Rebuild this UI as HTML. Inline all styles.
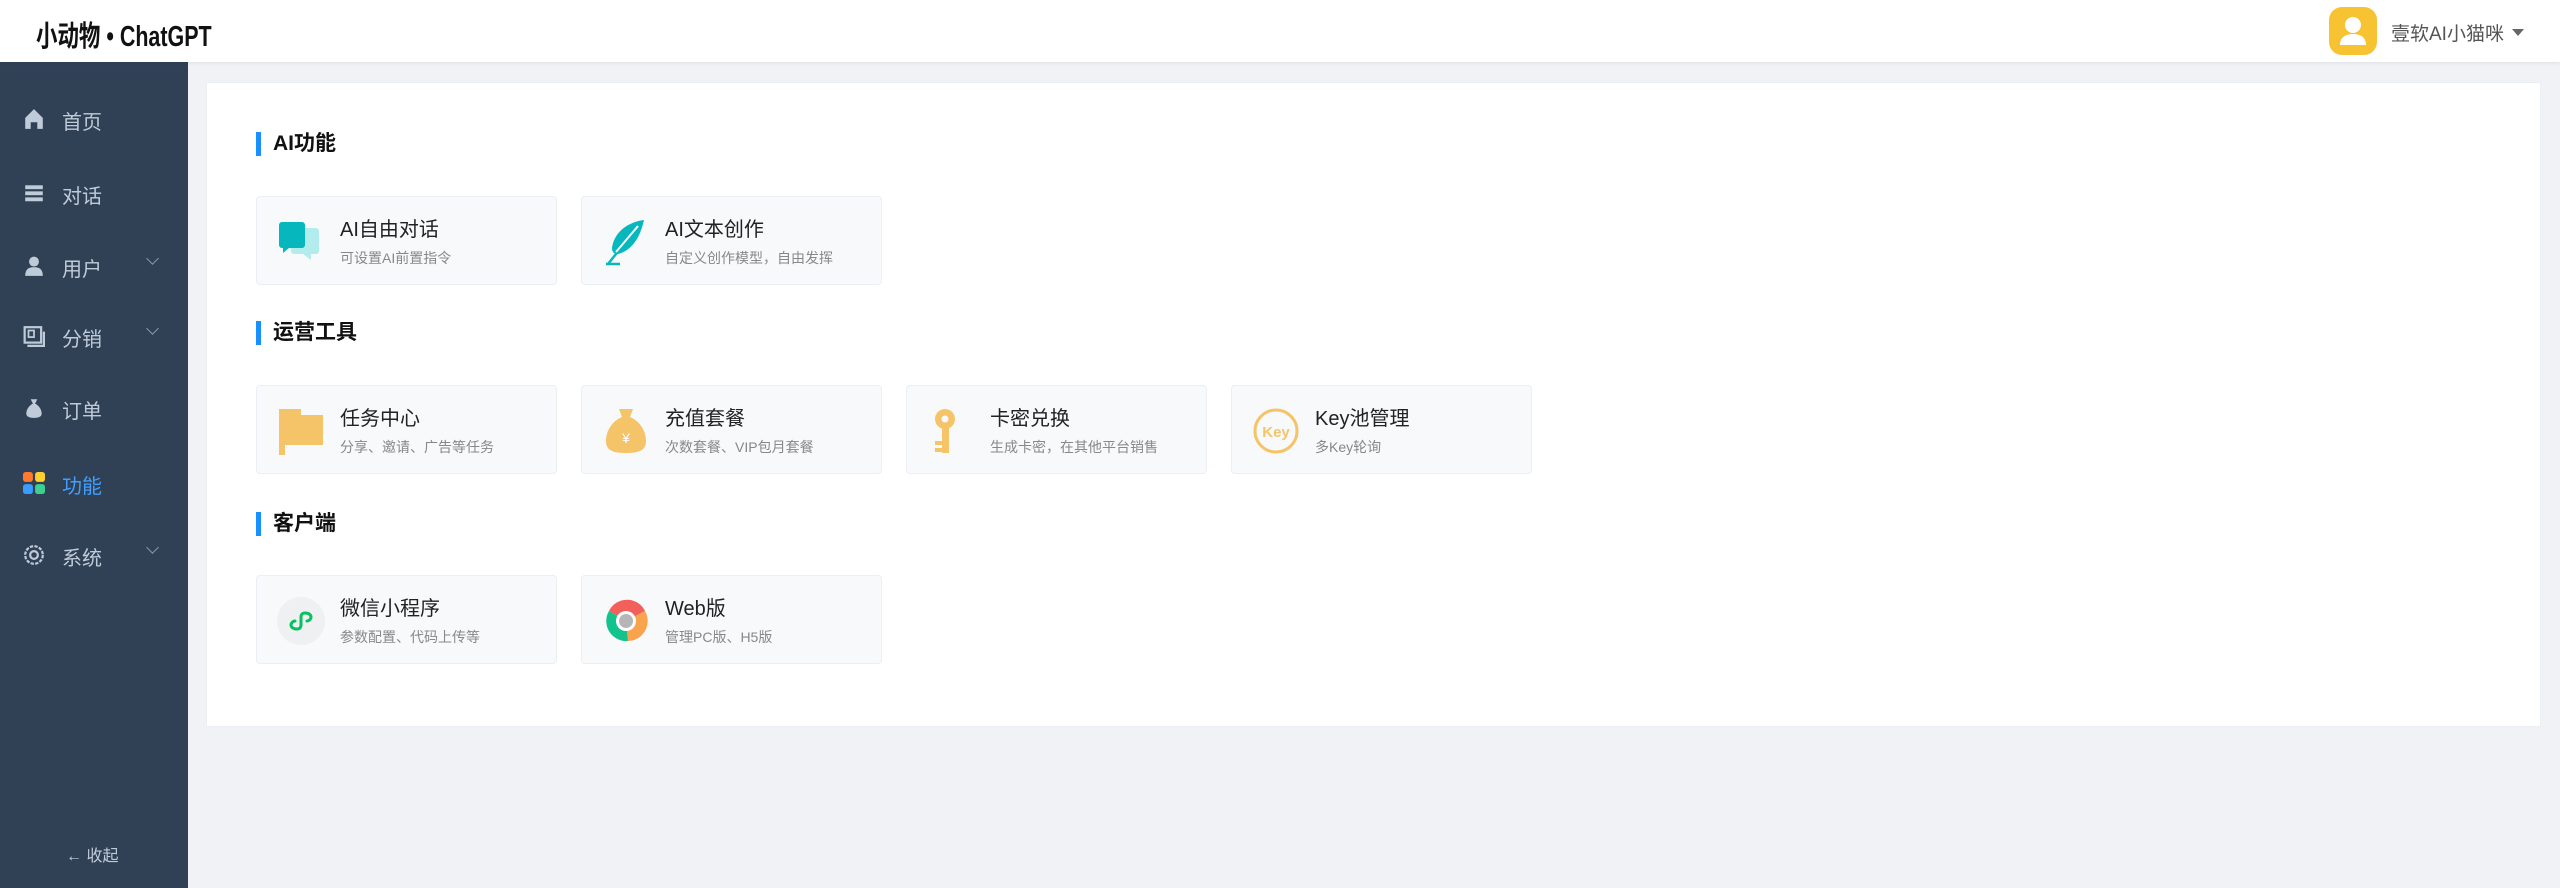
<!DOCTYPE html>
<html><head><meta charset="utf-8"><style>
*{margin:0;padding:0;box-sizing:border-box}
body{width:2560px;height:888px;overflow:hidden;background:#f0f2f5;font-family:"Liberation Sans","Noto Sans CJK SC",sans-serif;position:relative}
.hdr{position:absolute;left:0;top:0;width:2560px;height:62px;background:#fff;box-shadow:0 1px 4px rgba(0,21,41,.08);z-index:2}
.logo{position:absolute;left:36px;top:13px;font-size:29px;color:#111;font-weight:bold;transform:scaleX(0.74);transform-origin:left top;white-space:nowrap}
.av{position:absolute;left:2329px;top:7px;width:48px;height:48px;border-radius:13px;background:#f8c332}
.uname{position:absolute;left:2391px;top:19px;font-size:19px;color:#555}
.caret{position:absolute;left:2512px;top:29px;border-left:6px solid transparent;border-right:6px solid transparent;border-top:7px solid #666}
.side{position:absolute;left:0;top:62px;width:188px;height:826px;background:#304156}
.mi{position:absolute;left:0;width:188px;height:40px;color:#bfcbd9;font-size:20px}
.mi .ic{position:absolute;left:23px;top:9px;width:22px;height:22px}
.mi .t{position:absolute;left:62px;top:7px}
.mi .ch{position:absolute;left:148px;top:8px;width:9px;height:9px;border-right:1.5px solid #8a96a6;border-bottom:1.5px solid #8a96a6;transform:rotate(45deg)}
.main{position:absolute;left:206px;top:82px;width:2335px;height:645px;background:#fff;border:1px solid #ebeef5}
.st{position:absolute;left:256px;font-size:21px;font-weight:bold;color:#111;padding-left:17px;height:24px;line-height:24px}
.st:before{content:"";position:absolute;left:0;top:0;width:5px;height:24px;background:#1890ff}
.cd{position:absolute;width:301px;height:89px;background:#f8f9fb;border:1px solid #ebeef5;border-radius:4px}
.cd svg{position:absolute;left:20px;top:21px;width:48px;height:48px}
.cd .a{position:absolute;left:83px;top:16px;font-size:20px;color:#222}
.cd .b{position:absolute;left:83px;top:51px;font-size:14px;color:#888}
</style></head><body>
<div class="hdr">
<div class="logo">小动物 • ChatGPT</div>
<div class="av"><svg width="48" height="48" viewBox="0 0 48 48"><circle cx="24" cy="18" r="8" fill="#fff"/><path d="M11 38c0-8 6-11 13-11s13 3 13 11z" fill="#fff"/></svg></div>
<div class="uname">壹软AI小猫咪</div><div class="caret"></div>
</div>
<div class="side">
<div class="mi" style="top:37px"><svg class="ic" viewBox="0 0 20 20"><path d="M10 1L2 9v10h5v-6h6v6h5V9z" fill="#bfcbd9"/></svg><span class="t">首页</span></div>
<div class="mi" style="top:111px"><svg class="ic" viewBox="0 0 20 20"><rect x="2" y="3" width="16" height="3.5" fill="#bfcbd9"/><rect x="2" y="8.5" width="16" height="3.5" fill="#bfcbd9"/><rect x="2" y="14" width="16" height="3.5" fill="#bfcbd9"/></svg><span class="t">对话</span></div>
<div class="mi" style="top:184px"><svg class="ic" viewBox="0 0 20 20"><circle cx="10" cy="6" r="4.5" fill="#bfcbd9"/><path d="M2 19c0-6 3-8 8-8s8 2 8 8z" fill="#bfcbd9"/></svg><span class="t">用户</span><span class="ch"></span></div>
<div class="mi" style="top:254px"><svg class="ic" viewBox="0 0 20 20"><rect x="1.5" y="2" width="15" height="14" fill="none" stroke="#bfcbd9" stroke-width="2"/><rect x="5" y="5" width="5" height="6" fill="none" stroke="#bfcbd9" stroke-width="1.6"/><path d="M4 19h15V6" fill="none" stroke="#bfcbd9" stroke-width="2"/></svg><span class="t">分销</span><span class="ch"></span></div>
<div class="mi" style="top:326px"><svg class="ic" viewBox="0 0 20 20"><path d="M7 2h6l-2 4c4 2 6 6 6 9 0 3-3 4-7 4s-7-1-7-4c0-3 2-7 6-9z" fill="#bfcbd9"/></svg><span class="t">订单</span></div>
<div class="mi" style="top:401px;color:#409eff"><svg class="ic" viewBox="0 0 20 20"><rect x="0" y="0" width="9" height="9" rx="2.5" fill="#ff7a2f"/><rect x="11" y="0" width="9" height="9" rx="2.5" fill="#ffd02e"/><rect x="0" y="11" width="9" height="9" rx="2.5" fill="#3a9cff"/><rect x="11" y="11" width="9" height="9" rx="2.5" fill="#3ed08f"/></svg><span class="t">功能</span></div>
<div class="mi" style="top:473px"><svg class="ic" viewBox="0 0 20 20"><circle cx="10" cy="10" r="8" fill="none" stroke="#bfcbd9" stroke-width="2" stroke-dasharray="3 1.2"/><circle cx="10" cy="10" r="3.5" fill="none" stroke="#bfcbd9" stroke-width="2"/></svg><span class="t">系统</span><span class="ch"></span></div>
<div style="position:absolute;left:66px;top:780px;color:#bfcbd9;font-size:16px">← 收起</div>
</div>
<div class="main"></div>

<div class="st" style="top:132px">AI功能</div>
<div class="cd" style="left:256px;top:196px"><svg viewBox="0 0 48 48"><rect x="14" y="10" width="28" height="26" rx="3" fill="#b3ecec"/><path d="M26 36h8v6z" fill="#b3ecec"/><rect x="2" y="4" width="26" height="26" rx="3" fill="#06b8bd"/><path d="M6 30h6l-6 5z" fill="#06b8bd"/></svg><div class="a">AI自由对话</div><div class="b">可设置AI前置指令</div></div>
<div class="cd" style="left:581px;top:196px"><svg viewBox="0 0 48 48"><path d="M42 2C26 4 12 14 10 30c0 4 2 6 6 6 14-4 22-16 26-34z" fill="#06b8bd"/><path d="M38 6L6 46M4 46h14" stroke="#06b8bd" stroke-width="2.5" fill="none"/><path d="M36 8L14 34" stroke="#fff" stroke-width="2" fill="none"/></svg><div class="a">AI文本创作</div><div class="b">自定义创作模型，自由发挥</div></div>

<div class="st" style="top:321px">运营工具</div>
<div class="cd" style="left:256px;top:385px"><svg viewBox="0 0 48 48"><path d="M2 2h22v6h22v30H8v10H2z" fill="#f5c469"/></svg><div class="a">任务中心</div><div class="b">分享、邀请、广告等任务</div></div>
<div class="cd" style="left:581px;top:385px"><svg viewBox="0 0 48 48"><path d="M17 2h14l-3 8c10 4 16 14 16 24 0 10-8 12-20 12S4 44 4 34c0-10 6-20 16-24z" fill="#f5c469"/><text x="24" y="36" font-size="14" text-anchor="middle" fill="#fff" font-family="Liberation Sans">¥</text></svg><div class="a">充值套餐</div><div class="b">次数套餐、VIP包月套餐</div></div>
<div class="cd" style="left:906px;top:385px"><svg viewBox="0 0 48 48"><circle cx="18" cy="12" r="10" fill="#f5c469"/><circle cx="18" cy="12" r="3.5" fill="#f8f9fb"/><rect x="15" y="20" width="7" height="26" fill="#f5c469"/><rect x="8" y="34" width="8" height="4" fill="#f5c469"/><rect x="8" y="41" width="8" height="4" fill="#f5c469"/></svg><div class="a">卡密兑换</div><div class="b">生成卡密，在其他平台销售</div></div>
<div class="cd" style="left:1231px;top:385px"><svg viewBox="0 0 48 48"><circle cx="24" cy="24" r="21" fill="none" stroke="#f5c469" stroke-width="3"/><text x="24" y="30" font-size="15" font-weight="bold" text-anchor="middle" fill="#f5c469" font-family="Liberation Sans">Key</text></svg><div class="a">Key池管理</div><div class="b">多Key轮询</div></div>

<div class="st" style="top:512px">客户端</div>
<div class="cd" style="left:256px;top:575px"><svg viewBox="0 0 48 48"><circle cx="24" cy="24" r="24" fill="#eef0f2"/><path d="M20 32c-4 0-6-2-6-4s2-4 4-4M28 16c4 0 6 2 6 4s-2 4-4 4M20 32c3 0 4-2 4-4v-8c0-2 1-4 4-4" fill="none" stroke="#07c160" stroke-width="3" stroke-linecap="round"/></svg><div class="a">微信小程序</div><div class="b">参数配置、代码上传等</div></div>
<div class="cd" style="left:581px;top:575px"><svg viewBox="0 0 48 48"><path d="M24 24L7 14A20 20 0 0 1 43 14z" fill="#f2605c"/><path d="M24 24L43 14A20 20 0 0 1 26 44z" fill="#f9a34d"/><path d="M24 24L26 44A20 20 0 0 1 7 14z" fill="#12c38d"/><circle cx="24" cy="24" r="10" fill="#fff"/><circle cx="24" cy="24" r="7" fill="#b6b6b6"/></svg><div class="a">Web版</div><div class="b">管理PC版、H5版</div></div>
</body></html>
